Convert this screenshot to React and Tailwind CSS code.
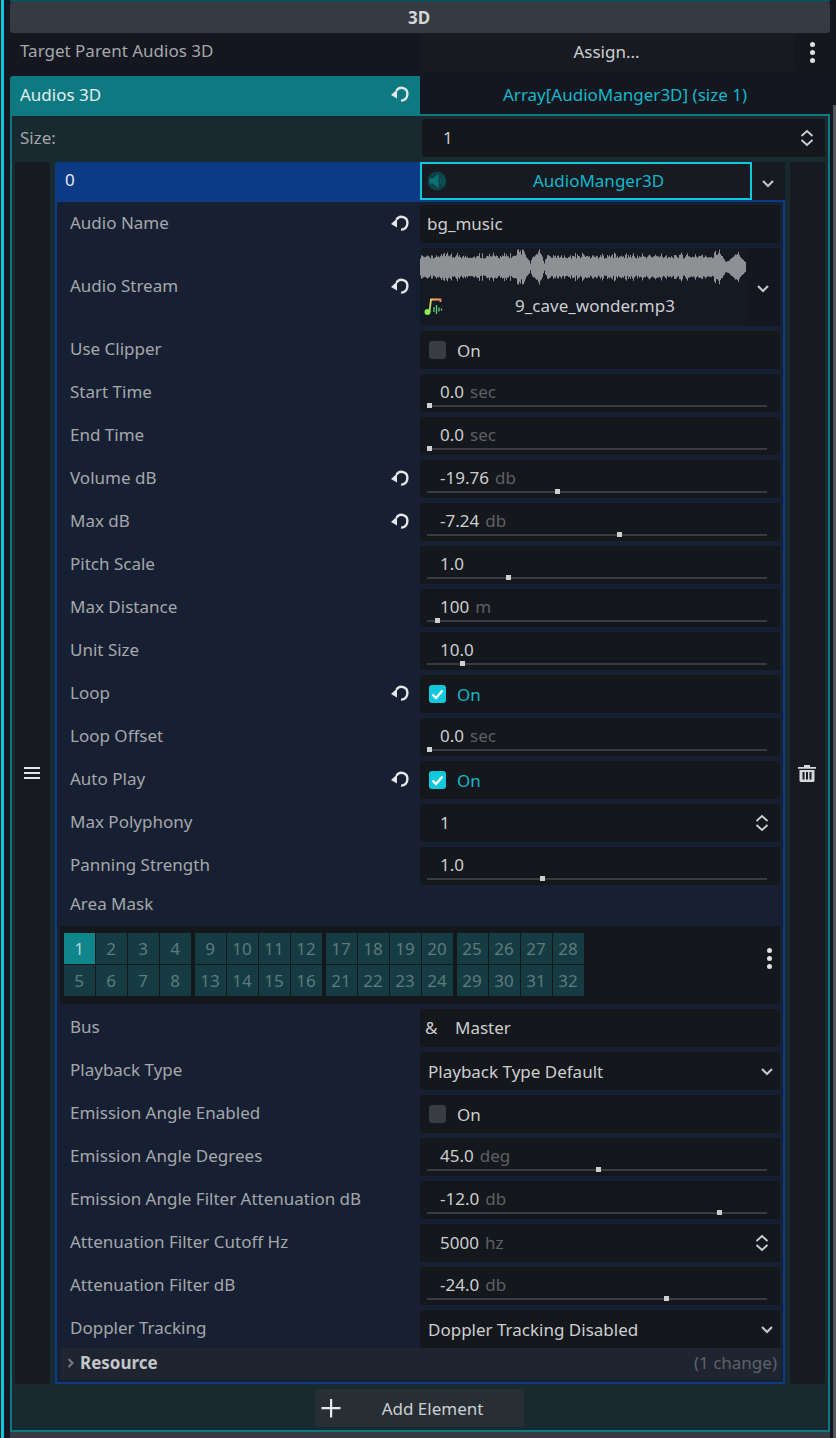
import React from "react";

// waveform columns for the audio stream preview
const buildWave = () => {
  let d = "";
  for (let x = 0; x < 326; x++) {
    const n1 = Math.abs(Math.sin(x * 12.9898) * 43758.5453) % 1;
    const n2 = Math.abs(Math.sin(x * 78.233) * 12543.123) % 1;
    let amp = 8.5 + n1 * 3.5 + (n2 > 0.82 ? 2.5 : 0);
    if (x > 96 && x <= 104) amp = 12 + n1 * 6;
    if (x > 104 && x <= 110) amp = 12 - (x - 104) * 1.5 + n1 * 2;
    if (x > 110 && x <= 118) amp = 4 + (x - 110) * 1.2 + n1 * 3;
    if (x > 118 && x <= 124) amp = 18 - (x - 118) * 2.4 + n1 * 2;
    if (x > 124 && x <= 128) amp = 4 + (x - 124) * 2 + n1 * 2;
    if (x > 293 && x <= 300) amp = 12 + n1 * 6;
    if (x > 300 && x <= 306) amp = 12 - (x - 300) * 1.4 + n1 * 2;
    if (x > 306 && x <= 318) amp = 4 + (x - 306) * 0.8 + n1 * 1.5;
    if (x > 318) amp = 12 - (x - 318) * 1.1 + n1;
    d += `M${x + 0.5} ${18 - amp}V${18 + amp}`;
  }
  return d;
};
const wavePath = buildWave();

const Reset = () => (
  <svg width="18" height="17" viewBox="0 0 18 17" fill="none">
    <path d="M5.500 4.700A5.800 5.800 0 0 1 16.300 8.200A6 6 0 0 1 10 14.600" stroke="#e4e6e7" strokeWidth="2.400" />
    <path d="M0 8.900L6 3.500V12.500Z" fill="#e4e6e7" />
  </svg>
);

const Chevron = ({ color = "#c4c5c7", className = "" }) => (
  <svg className={className} width="14" height="9" viewBox="0 0 14 9" fill="none">
    <path d="M2 2l5 5 5-5" stroke={color} strokeWidth="2.200" />
  </svg>
);

const UpDown = () => (
  <svg width="14" height="18" viewBox="0 0 14 18" fill="none">
    <path d="M1.500 7L7 2l5.500 5M1.500 11L7 16l5.500-5" stroke="#cfd0d2" strokeWidth="1.800" />
  </svg>
);

const Dots = () => (
  <div className="flex flex-col gap-[3px]">
    <div className="h-[5px] w-[5px] rounded-full bg-[#e0e0e0]"></div>
    <div className="h-[5px] w-[5px] rounded-full bg-[#e0e0e0]"></div>
    <div className="h-[5px] w-[5px] rounded-full bg-[#e0e0e0]"></div>
  </div>
);

const Field = ({ children, className = "" }) => (
  <div className={`h-[38px] rounded-[3px] bg-[#14171c] ${className}`}>{children}</div>
);

const Row = ({ label, reset, children }) => (
  <div className="flex">
    <div className="flex h-[38px] w-[363px] items-center justify-between pb-[2px] pl-[13px] pr-[11px] text-[#a5a7ab]">
      <span>{label}</span>
      {reset && <Reset />}
    </div>
    <div className="w-[360px]">{children}</div>
  </div>
);

const Slider = ({ value, unit, at }) => (
  <Field className="flex flex-col">
    <div className="flex h-[31px] items-center gap-[6px] pl-[20px] pt-[5px]">
      <span className="text-[#cdced0]">{value}</span>
      {unit && <span className="text-[#5e6064]">{unit}</span>}
    </div>
    <div className="relative ml-[7px] mr-[13px] h-[2px] bg-[#3a3b3e]">
      <div
        className="absolute top-[-2px] h-[5px] w-[5px] bg-[#cfcfcf]"
        style={{ left: `${at}px` }}
      ></div>
    </div>
  </Field>
);

const Toggle = ({ on }) => (
  <Field className="flex items-center gap-[11px] pl-[9px]">
    {on ? (
      <div className="flex h-[18px] w-[17px] items-center justify-center rounded-[3px] bg-[#10c8dc]">
        <svg width="13" height="11" viewBox="0 0 13 11" fill="none">
          <path d="M1.500 5.500L5 9l6.500-7.500" stroke="#fff" strokeWidth="2.400" />
        </svg>
      </div>
    ) : (
      <div className="h-[18px] w-[17px] rounded-[3px] bg-[#3a3c41]"></div>
    )}
    <span className={on ? "pt-[1px] text-[#12b8cb]" : "pt-[1px] text-[#cdced0]"}>On</span>
  </Field>
);

const Spin = ({ value, unit }) => (
  <Field className="flex items-center justify-between pl-[20px] pr-[11px]">
    <div className="flex gap-[6px]">
      <span className="text-[#cdced0]">{value}</span>
      {unit && <span className="text-[#5e6064]">{unit}</span>}
    </div>
    <UpDown />
  </Field>
);

const Options = ({ value }) => (
  <Field className="flex items-center justify-between pl-[8px] pr-[6px]">
    <span className="pt-[1px] text-[#cdced0]">{value}</span>
    <Chevron />
  </Field>
);

const maskGroups = [
  [1, 2, 3, 4, 5, 6, 7, 8],
  [9, 10, 11, 12, 13, 14, 15, 16],
  [17, 18, 19, 20, 21, 22, 23, 24],
  [25, 26, 27, 28, 29, 30, 31, 32],
];

const AreaMask = () => (
  <div className="flex flex-col">
    <div className="flex h-[36px] items-start pl-[13px] text-[#a5a7ab]">
      <span className="leading-[28px]">Area Mask</span>
    </div>
    <div className="ml-[3px] flex h-[78px] w-[720px] items-start justify-between rounded-[3px] bg-[#14171c] pl-[4px] pr-[8px] pt-[7px]">
      <div className="flex gap-[4px]">
        {maskGroups.map((group, i) => (
          <div key={i} className="grid grid-cols-4 gap-[1px]">
            {group.map((n) => (
              <div
                key={n}
                className={
                  n === 1
                    ? "flex h-[31px] w-[31px] items-center justify-center bg-[#0f858c] pr-[1px] text-[#b4d4d6]"
                    : "flex h-[31px] w-[31px] items-center justify-center bg-[#143c42] pr-[1px] text-[#5f7a7d]"
                }
              >
                {n}
              </div>
            ))}
          </div>
        ))}
      </div>
      <div className="pt-[15px]">
        <Dots />
      </div>
    </div>
  </div>
);

const Speaker = () => (
  <svg width="20" height="20" viewBox="0 0 20 20">
    <circle cx="10" cy="10" r="9.500" fill="#0e4248" />
    <path d="M2.500 7.500h3.500L11.500 3v14L6 12.500H2.500Z" fill="#0d7278" />
    <path d="M13 7.500c1.500 1.500 1.500 3.500 0 5M15 5.500c2.500 2.500 2.500 6.500 0 9" stroke="#0d5a60" strokeWidth="1.400" fill="none" />
  </svg>
);

const MusicIcon = () => (
  <svg width="20" height="20" viewBox="0 0 20 20" fill="none">
    <defs>
      <linearGradient id="note" x1="0" y1="1" x2="1" y2="0">
        <stop offset="0" stopColor="#8fe85a" />
        <stop offset="0.5" stopColor="#e8d060" />
        <stop offset="1" stopColor="#ff8a5c" />
      </linearGradient>
    </defs>
    <circle cx="3.500" cy="16" r="3" fill="#8fe85a" />
    <path d="M5.500 16L7 3.500h9.500V6" stroke="url(#note)" strokeWidth="1.800" />
    <path d="M10 11v5M12.500 9v9M15 11.500v4M17.500 12.500v2" stroke="#5fd07a" strokeWidth="1.300" />
  </svg>
);

const Trash = () => (
  <svg width="18" height="18" viewBox="0 0 18 18">
    <path d="M0 3h18v1.800H0ZM6 1h6v2H6Z" fill="#d8d9da" />
    <path d="M1.500 6h15v10.500a1.500 1.500 0 0 1-1.500 1.500H3a1.500 1.500 0 0 1-1.500-1.500Z" fill="#d8d9da" />
    <path d="M4.500 8h2v7.500h-2ZM8 8h2v7.500H8ZM11.500 8h2v7.500h-2Z" fill="#1a1d24" />
  </svg>
);

export default function App() {
  return (
    <div className="flex h-[1438px] w-[836px] overflow-hidden bg-[#14171f] text-[17px] [font-family:'Noto_Sans',sans-serif]">
      <div className="ml-[1px] w-[3px] bg-[#10c8dc]"></div>
      <div className="ml-[6px] flex w-[820px] flex-col">
        <div className="h-[2px] bg-[#0f4f55]"></div>
        <div className="flex h-[31px] items-center justify-center rounded-[3px] pr-[2px] bg-[#363a42] font-bold text-[#d4d5d7]">
          3D
        </div>

        <div className="flex h-[43px] items-start">
          <div className="flex h-[36px] w-[410px] items-center pl-[10px] text-[#a5a7ab]">
            Target Parent Audios 3D
          </div>
          <div className="flex h-[38px] w-[375px] items-center justify-center bg-[#171a21] pr-[2px] text-[#cdced0]">
            Assign...
          </div>
          <div className="flex h-[38px] w-[35px] items-center justify-center bg-[#14171c]">
            <Dots />
          </div>
        </div>

        <div className="flex h-[40px]">
          <div className="flex w-[410px] items-center justify-between rounded-tl-[3px] bg-[#0c7a80] pb-[3px] pl-[10px] pr-[11px] text-[#e6eeee]">
            <span>Audios 3D</span>
            <Reset />
          </div>
          <div className="flex w-[410px] flex-col">
            <div className="flex h-[38px] items-center justify-center bg-[#14171f] text-[#12b8cb]">
              Array[AudioManger3D] (size 1)
            </div>
            <div className="h-[2px] bg-[#0c7a80]"></div>
          </div>
        </div>

        <div className="flex h-[1316px] flex-col border-x-2 border-b-2 border-[#0c7a80] bg-[#182a30]">
          <div className="mt-[3px] flex h-[38px]">
            <div className="flex w-[410px] items-center pl-[8px] text-[#a5a7ab]">Size:</div>
            <div className="flex w-[403px] items-center justify-between rounded-[3px] bg-[#14171c] pl-[21px] pr-[11px] text-[#cdced0]">
              <span>1</span>
              <UpDown />
            </div>
          </div>

          <div className="mt-[5px] flex h-[1222px] gap-[5px] pl-[3px]">
            <div className="flex w-[35px] flex-col items-center justify-center gap-[3px] rounded-[3px] bg-[#171a21] pr-[1px]">
              <div className="h-[2px] w-[16px] bg-[#e4e5e6]"></div>
              <div className="h-[2px] w-[16px] bg-[#e4e5e6]"></div>
              <div className="h-[2px] w-[16px] bg-[#e4e5e6]"></div>
            </div>

            <div className="flex w-[730px] flex-col">
              <div className="flex h-[40px]">
                <div className="flex w-[365px] items-center rounded-tl-[3px] bg-[#0c3a85] pb-[4px] pl-[10px] text-[#e6eaf0]">
                  0
                </div>
                <div className="flex w-[365px] flex-col">
                  <div className="flex h-[38px]">
                    <div className="flex w-[332px] items-center border-2 border-[#10c8dc] bg-[#171a21] pl-[5px]">
                      <Speaker />
                      <span className="flex-1 text-center text-[#12b8cb]">AudioManger3D</span>
                    </div>
                    <div className="flex w-[33px] items-center justify-center bg-[#171a21] pt-[4px] pr-[2px]">
                      <Chevron />
                    </div>
                  </div>
                  <div className="h-[2px] bg-[#0c3a85]"></div>
                </div>
              </div>

              <div className="flex h-[1182px] flex-col gap-[5px] border-x-2 border-b-2 border-[#0c3a85] bg-[#172032] pt-[3px]">
                <Row label="Audio Name" reset>
                  <Field className="flex items-center bg-[#171a21] pl-[7px] text-[#cdced0]">bg_music</Field>
                </Row>

                <div className="flex">
                  <div className="flex h-[78px] w-[363px] items-center justify-between pb-[2px] pl-[13px] pr-[11px] text-[#a5a7ab]">
                    <span>Audio Stream</span>
                    <Reset />
                  </div>
                  <div className="flex h-[78px] w-[360px] rounded-[3px] bg-[#151922]">
                    <div className="flex w-[326px] flex-col">
                      <svg className="mt-[1px]" width="326" height="37" viewBox="0 0 326 37">
                        <path d={wavePath} stroke="#8e9093" strokeWidth="1" />
                      </svg>
                      <div className="flex h-[36px] items-center pl-[4px] pt-[3px]">
                        <MusicIcon />
                        <span className="flex-1 pl-[4px] pr-[4px] text-center text-[#cdced0]">9_cave_wonder.mp3</span>
                      </div>
                    </div>
                    <div className="flex flex-1 items-center justify-center bg-[#14171f] pr-[1px] pt-[2px]">
                      <Chevron />
                    </div>
                  </div>
                </div>

                <Row label="Use Clipper"><Toggle /></Row>
                <Row label="Start Time"><Slider value="0.0" unit="sec" at={0} /></Row>
                <Row label="End Time"><Slider value="0.0" unit="sec" at={0} /></Row>
                <Row label="Volume dB" reset><Slider value="-19.76" unit="db" at={128} /></Row>
                <Row label="Max dB" reset><Slider value="-7.24" unit="db" at={190} /></Row>
                <Row label="Pitch Scale"><Slider value="1.0" at={79} /></Row>
                <Row label="Max Distance"><Slider value="100" unit="m" at={8} /></Row>
                <Row label="Unit Size"><Slider value="10.0" at={33} /></Row>
                <Row label="Loop" reset><Toggle on /></Row>
                <Row label="Loop Offset"><Slider value="0.0" unit="sec" at={0} /></Row>
                <Row label="Auto Play" reset><Toggle on /></Row>
                <Row label="Max Polyphony"><Spin value="1" /></Row>
                <Row label="Panning Strength"><Slider value="1.0" at={113} /></Row>

                <AreaMask />

                <Row label="Bus">
                  <Field className="flex items-center bg-[#181b22] text-[#cdced0]">
                    <div className="flex h-full w-[28px] items-center rounded-l-[3px] bg-[#14171c] pl-[5px]">&amp;</div>
                    <span className="pl-[7px]">Master</span>
                  </Field>
                </Row>
                <Row label="Playback Type"><Options value="Playback Type Default" /></Row>
                <Row label="Emission Angle Enabled"><Toggle /></Row>
                <Row label="Emission Angle Degrees"><Slider value="45.0" unit="deg" at={169} /></Row>
                <Row label="Emission Angle Filter Attenuation dB"><Slider value="-12.0" unit="db" at={290} /></Row>
                <Row label="Attenuation Filter Cutoff Hz"><Spin value="5000" unit="hz" /></Row>
                <Row label="Attenuation Filter dB"><Slider value="-24.0" unit="db" at={237} /></Row>

                <div className="flex flex-col">
                  <Row label="Doppler Tracking"><Options value="Doppler Tracking Disabled" /></Row>
                  <div className="ml-[3px] flex h-[31px] w-[721px] items-center justify-between bg-[#1e2530] pb-[1px] pl-[7px] pr-[4px]">
                    <div className="flex items-center gap-[6px]">
                      <svg width="7" height="10" viewBox="0 0 7 10" fill="none">
                        <path d="M1.500 1l4 4-4 4" stroke="#74777b" strokeWidth="2.200" />
                      </svg>
                      <span className="font-bold text-[#c4c6c9]">Resource</span>
                    </div>
                    <span className="text-[#5e6268]">(1 change)</span>
                  </div>
                </div>
              </div>
            </div>

            <div className="flex w-[35px] items-center justify-center rounded-[3px] bg-[#171a21] pr-[2px]">
              <Trash />
            </div>
          </div>

          <div className="mt-[5px] flex justify-center pr-[1px]">
            <div className="flex h-[38px] w-[209px] items-center rounded-[3px] bg-[#272f35] pl-[6px] text-[#cdced0]">
              <svg width="20" height="20" viewBox="0 0 20 20">
                <path d="M9 1h2.200v8H19.500v2.200H11.200V19.500H9V11.200H.5V9H9Z" fill="#e8e9ea" />
              </svg>
              <span className="flex-1 px-[10px] pt-[1px] text-center">Add Element</span>
            </div>
          </div>
        </div>

        <div className="flex-1 bg-[#363a42]"></div>
      </div>
      <div className="ml-[3px] mt-[105px] w-[3px] bg-[#55585e]"></div>
    </div>
  );
}
